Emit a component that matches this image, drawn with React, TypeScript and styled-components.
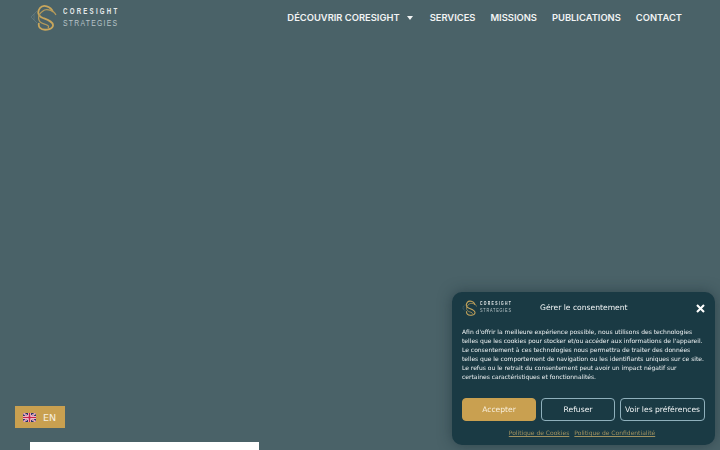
import React from 'react';
import styled, { createGlobalStyle } from 'styled-components';

const GlobalStyle = createGlobalStyle`
    html, body {
        margin: 0;
        padding: 0;
        height: 100%;
        overflow: hidden;
        background-color: #4a6268;
    }
`;

const Page = styled.div`
    width: 720px;
    height: 450px;
    overflow: hidden;
    display: flex;
    flex-direction: column;
    background-color: #4a6268;
`;

const Header = styled.header`
    height: 35px;
    flex-shrink: 0;
    display: flex;
    justify-content: space-between;
    align-items: center;
    padding: 0 38px 0 31px;
`;

const LogoWrap = styled.div<{ $small?: boolean }>`
    display: flex;
    align-items: center;
    gap: ${(props) => (props.$small ? '3px' : '6px')};
`;

const LogoText = styled.div<{ $small?: boolean }>`
    display: flex;
    flex-direction: column;
    gap: ${(props) => (props.$small ? '1.5px' : '2.5px')};
    font-family: 'Liberation Sans', sans-serif;
    line-height: 1;
    transform: scaleX(0.72);
    transform-origin: left center;
    white-space: nowrap;
`;

const LogoTop = styled.span<{ $small?: boolean }>`
    font-weight: 700;
    font-size: ${(props) => (props.$small ? '4.8px' : '8.5px')};
    letter-spacing: ${(props) => (props.$small ? '1.8px' : '3.1px')};
    color: #e4e9ea;
`;

const LogoBottom = styled.span<{ $small?: boolean }>`
    font-size: ${(props) => (props.$small ? '5.3px' : '9.5px')};
    letter-spacing: ${(props) => (props.$small ? '1.1px' : '1.75px')};
    color: #b9c5c8;
`;

const Nav = styled.nav`
    display: flex;
    align-items: center;
    gap: 15px;
`;

const NavItem = styled.a`
    display: flex;
    align-items: center;
    gap: 7px;
    font-family: Inter, 'Open Sans', sans-serif;
    font-size: 9.4px;
    font-weight: 600;
    color: #f2f4f4;
    white-space: nowrap;
`;

const Caret = styled.span`
    width: 0;
    height: 0;
    margin-right: 2px;
    border-left: 3.5px solid transparent;
    border-right: 3.5px solid transparent;
    border-top: 4px solid #f2f4f4;
`;

const Hero = styled.div`
    flex: 1;
`;

const CardRow = styled.div`
    flex-shrink: 0;
    padding: 0 30px;
`;

const WhiteCard = styled.div`
    width: 229px;
    height: 8px;
    background-color: #ffffff;
`;

const LangSwitch = styled.div`
    position: fixed;
    left: 15px;
    top: 406px;
    width: 50px;
    height: 22px;
    box-sizing: border-box;
    padding-left: 8px;
    display: flex;
    align-items: center;
    gap: 7px;
    background-color: #c9a050;
    font-family: 'DejaVu Sans', sans-serif;
    font-size: 9.5px;
    color: #f7efe0;
`;

const Dialog = styled.aside`
    position: fixed;
    left: 452px;
    top: 292px;
    width: 263px;
    height: 153px;
    box-sizing: border-box;
    padding: 0 10px;
    border-radius: 10px;
    background-color: #1a3a44;
    box-shadow: 0 0 14px rgba(20, 40, 48, 0.5);
    font-family: 'DejaVu Sans', Verdana, sans-serif;
    color: #e6ecee;
    display: flex;
    flex-direction: column;
`;

const DialogHeader = styled.div`
    height: 31px;
    display: flex;
    align-items: center;
`;

const DialogLogo = styled.div`
    width: 78px;
    flex-shrink: 0;
`;

const DialogTitle = styled.div`
    flex: 1;
    font-size: 7.6px;
    color: #f0f4f5;
`;

const CloseButton = styled.button`
    border: 0;
    padding: 0;
    margin-top: 1px;
    background: none;
    display: flex;
`;

const Message = styled.p`
    margin: 4px 0 0;
    font-size: 6px;
    line-height: 9px;
    color: #edf1f2;
    white-space: nowrap;
`;

const Buttons = styled.div`
    display: flex;
    gap: 5px;
    margin-top: 17px;
`;

const ActionButton = styled.button<{ $primary?: boolean; $width: number }>`
    width: ${(props) => props.$width}px;
    height: 23px;
    padding: 0;
    box-sizing: border-box;
    border-radius: 4px;
    border: 1px solid ${(props) => (props.$primary ? '#c9a050' : '#8fb0bc')};
    background-color: ${(props) => (props.$primary ? '#c9a050' : 'transparent')};
    color: ${(props) => (props.$primary ? '#f8eeda' : '#f0f4f5')};
    font-family: inherit;
    font-size: 7.6px;
    white-space: nowrap;
`;

const Links = styled.div`
    display: flex;
    justify-content: center;
    gap: 5px;
    margin-top: 8px;
    padding-right: 3px;
`;

const PolicyLink = styled.a`
    font-size: 6px;
    color: #a0915f;
    text-decoration: underline;
`;

const LogoMark = ({ size }: { size: number }) => (
    <svg width={size * 0.96} height={size} viewBox="0 0 26 27" fill="none">
        <path
            d="M0 13 L6 7 M0 13 L6 19 M3 10 L3 16"
            stroke="#7d9298"
            strokeWidth="0.7"
            opacity="0.55"
        />
        <path
            d="M22 8 C20 2 12 0 9 4 C6 8 7 12 12 14 C17 16 23 18 22 22 C21 26 12 27 9 24 C8 23 7.5 21 8 19"
            stroke="#c8a65c"
            strokeWidth="1.8"
        />
        <path
            d="M25 11 C23 6 15 4 12 7 C6 11 6 18 13 20 C16 21 19 22 17 24"
            stroke="#b49a5a"
            strokeWidth="1.3"
        />
    </svg>
);

const FlagEn = () => (
    <svg width="13" height="9" viewBox="0 0 13 9">
        <rect width="13" height="9" rx="1" fill="#2b2f66" />
        <path d="M0 0 L13 9 M13 0 L0 9" stroke="#f4e8ee" strokeWidth="1.8" />
        <path d="M0 0 L13 9 M13 0 L0 9" stroke="#c8234a" strokeWidth="0.6" />
        <path d="M6.5 0 V9 M0 4.5 H13" stroke="#f4e8ee" strokeWidth="3" />
        <path d="M6.5 0 V9 M0 4.5 H13" stroke="#c8234a" strokeWidth="1.7" />
    </svg>
);

const CloseIcon = () => (
    <svg width="9" height="9" viewBox="0 0 9 9">
        <path d="M1 1 L8 8 M8 1 L1 8" stroke="#ffffff" strokeWidth="2.1" />
    </svg>
);

const navLinks = ['SERVICES', 'MISSIONS', 'PUBLICATIONS', 'CONTACT'];

const messageLines = [
    "Afin d'offrir la meilleure expérience possible, nous utilisons des technologies",
    "telles que les cookies pour stocker et/ou accéder aux informations de l'appareil.",
    'Le consentement à ces technologies nous permettra de traiter des données',
    'telles que le comportement de navigation ou les identifiants uniques sur ce site.',
    'Le refus ou le retrait du consentement peut avoir un impact négatif sur',
    'certaines caractéristiques et fonctionnalités.',
];

const App = () => {
    return (
        <Page>
            <GlobalStyle />
            <Header>
                <LogoWrap>
                    <LogoMark size={27} />
                    <LogoText>
                        <LogoTop>CORESIGHT</LogoTop>
                        <LogoBottom>STRATEGIES</LogoBottom>
                    </LogoText>
                </LogoWrap>
                <Nav>
                    <NavItem>
                        DÉCOUVRIR CORESIGHT
                        <Caret />
                    </NavItem>
                    {navLinks.map((link) => (
                        <NavItem key={link}>{link}</NavItem>
                    ))}
                </Nav>
            </Header>
            <Hero />
            <CardRow>
                <WhiteCard />
            </CardRow>

            <LangSwitch>
                <FlagEn />
                EN
            </LangSwitch>

            <Dialog>
                <DialogHeader>
                    <DialogLogo>
                        <LogoWrap $small>
                            <LogoMark size={16} />
                            <LogoText $small>
                                <LogoTop $small>CORESIGHT</LogoTop>
                                <LogoBottom $small>STRATEGIES</LogoBottom>
                            </LogoText>
                        </LogoWrap>
                    </DialogLogo>
                    <DialogTitle>Gérer le consentement</DialogTitle>
                    <CloseButton>
                        <CloseIcon />
                    </CloseButton>
                </DialogHeader>
                <Message>
                    {messageLines.map((line) => (
                        <React.Fragment key={line}>
                            {line}
                            <br />
                        </React.Fragment>
                    ))}
                </Message>
                <Buttons>
                    <ActionButton $primary $width={74}>
                        Accepter
                    </ActionButton>
                    <ActionButton $width={74}>Refuser</ActionButton>
                    <ActionButton $width={85}>Voir les préférences</ActionButton>
                </Buttons>
                <Links>
                    <PolicyLink>Politique de Cookies</PolicyLink>
                    <PolicyLink>Politique de Confidentialité</PolicyLink>
                </Links>
            </Dialog>
        </Page>
    );
};

export default App;
